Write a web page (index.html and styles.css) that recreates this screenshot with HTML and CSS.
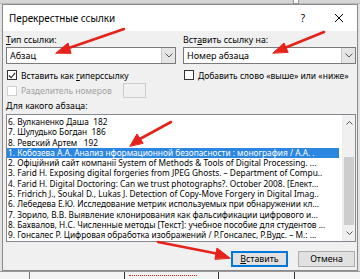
FILE: index.html
```html
<!DOCTYPE html>
<html lang="ru">
<head>
    <meta charset="UTF-8">
    <meta name="viewport" content="width=device-width, initial-scale=1.0">
    <title>Перекрестные ссылки</title>
    <link rel="stylesheet" href="styles.css">
</head>
<body>
    <div class="word-top"><span class="ruler-mark"></span></div>

    <div class="dialog">
        <div class="titlebar">
            <span class="title">Перекрестные ссылки</span>
            <span class="help">?</span>
            <span class="close">
                <svg width="10" height="10" viewBox="0 0 10 10"><path d="M1 1L9 9M9 1L1 9" stroke="#000" stroke-width="1"/></svg>
            </span>
        </div>

        <div class="content">
            <div class="cols">
                <div class="col">
                    <div class="lbl"><u>Т</u>ип ссылки:</div>
                    <div class="combo">
                        <span class="combo-text">Абзац</span>
                        <span class="drop"><svg width="8" height="5" viewBox="0 0 8 5"><path d="M0.5 0.5L4 4L7.5 0.5" fill="none" stroke="#555" stroke-width="1"/></svg></span>
                    </div>
                    <div class="check">
                        <span class="box"><svg width="9" height="9" viewBox="0 0 9 9"><path d="M1 4.5L3.5 7L8 1.5" fill="none" stroke="#222" stroke-width="1.2"/></svg></span>
                        <span class="check-text">Вставить как <u>г</u>иперссылку</span>
                    </div>
                    <div class="check disabled">
                        <span class="box"></span>
                        <span class="check-text">Разделитель номеров</span>
                        <span class="sep-field"></span>
                    </div>
                </div>
                <div class="col">
                    <div class="lbl">Вст<u>а</u>вить ссылку на:</div>
                    <div class="combo">
                        <span class="combo-text">Номер абзаца</span>
                        <span class="drop"><svg width="8" height="5" viewBox="0 0 8 5"><path d="M0.5 0.5L4 4L7.5 0.5" fill="none" stroke="#555" stroke-width="1"/></svg></span>
                    </div>
                    <div class="check">
                        <span class="box"></span>
                        <span class="check-text"><u>Д</u>обавить слово «выше» или «ниже»</span>
                    </div>
                </div>
            </div>

            <div class="lbl list-lbl">Для какого абзаца:</div>
            <div class="listbox">
                <ul class="items">
                    <li>6. Вулканенко Даша&nbsp; 182</li>
                    <li>7. Шулудько Богдан&nbsp; 186</li>
                    <li>8. Ревский Артем&nbsp;&nbsp; 192</li>
                    <li class="selected">1. Кобозева А.А. Анализ нформационной безопасности : монография / А.А. .</li>
                    <li>2. Офіційний сайт компанії System of Methods &amp; Tools of Digital Processing. ...</li>
                    <li>3. Farid H. Exposing digital forgeries from JPEG Ghosts. – Department of Compu..</li>
                    <li>4. Farid H. Digital Doctoring: Can we trust photographs?. October 2008. [Елект...</li>
                    <li>5. Fridrich J., Soukal D., Lukas J. Detection of Copy-Move Forgery in Digital Imag..</li>
                    <li>6. Лебедева Е.Ю. Исследование метрик используемых при обнаружении кл...</li>
                    <li>7. Зорило, В.В. Выявление клонирования как фальсификации цифрового и...</li>
                    <li>8. Бахвалов, Н.С. Численные методы [Текст]: учебное пособие для студентов ...</li>
                    <li>9. Гонсалес Р. Цифровая обработка изображений / Р.Гонсалес, Р.Вудс. – М.: ...</li>
                </ul>
                <div class="scrollbar">
                    <span class="sb-arrow"><svg width="7" height="4" viewBox="0 0 7 4"><path d="M0.5 3.5L3.5 0.5L6.5 3.5" fill="none" stroke="#555" stroke-width="1"/></svg></span>
                    <span class="sb-track"><span class="sb-thumb"></span></span>
                    <span class="sb-arrow"><svg width="7" height="4" viewBox="0 0 7 4"><path d="M0.5 0.5L3.5 3.5L6.5 0.5" fill="none" stroke="#555" stroke-width="1"/></svg></span>
                </div>
            </div>

            <div class="buttons">
                <button class="btn default"><u>В</u>ставить</button>
                <button class="btn">Отмена</button>
            </div>
        </div>
    </div>

    <div class="word-bottom">
        <span class="cell c1"></span>
        <span class="cell c2"></span>
        <span class="cell c3"><span class="squiggle"></span></span>
        <span class="cell c4"></span>
        <span class="cell c5"></span>
    </div>

    <svg class="arrows" width="360" height="279" viewBox="0 0 360 279">
        <g stroke="#e5231b" stroke-width="2.6" stroke-linecap="round" fill="#e5231b">
            <line x1="124" y1="29" x2="66" y2="49"/>
            <polygon points="56,53 68,43 71,53" stroke-width="1"/>
            <line x1="324" y1="32" x2="282" y2="49"/>
            <polygon points="273,53 284,43 288,52" stroke-width="1"/>
            <line x1="171" y1="122" x2="138" y2="140"/>
            <polygon points="130,146 137,134 143,143" stroke-width="1"/>
            <line x1="158" y1="242" x2="219" y2="254"/>
            <polygon points="230,258 217,248 215,259" stroke-width="1"/>
        </g>
    </svg>
</body>
</html>
```

FILE: styles.css
```css
body { margin: 0; width: 360px; height: 279px; overflow: hidden; position: relative; background: #e3e3e3; font-family: "Noto Sans", "Open Sans", sans-serif; font-size: 8.5px; color: #000; }

.word-top { height: 4px; background: #d6d6d6; border-bottom: 1px solid #b9b9b9; box-sizing: border-box; position: relative; }
.ruler-mark { position: absolute; left: 293px; top: 0; width: 6px; height: 4px; background: #fafafa; border: 1px solid #999; border-top: 0; box-sizing: border-box; }

.dialog { margin-left: 2px; width: 356px; border: 1px solid #8a8a8a; box-sizing: border-box; background: #f0f0f0; }
.titlebar { height: 26px; background: #fff; display: flex; align-items: center; padding-left: 6px; }
.title { flex: 1; font-size: 9.9px; }
.help { width: 36px; font-size: 10px; text-align: center; }
.close { width: 36px; display: flex; justify-content: center; }

.content { padding: 3px 1px 3px 3px; }
.cols { display: grid; grid-template-columns: 170px 173px; column-gap: 7px; }
.lbl { height: 12px; line-height: 12px; white-space: nowrap; font-size: 8.8px; }
.lbl u, .check u, .btn u { text-decoration-thickness: 1px; text-underline-offset: 1px; }

.combo { margin-top: 1px; height: 17px; box-sizing: border-box; border: 1px solid #7a7a7a; background: #fff; display: flex; }
.combo-text { flex: 1; line-height: 15px; padding-left: 3px; font-size: 9px; }
.drop { width: 13px; background: #e5e5e5; border-left: 1px solid #c8c8c8; display: flex; align-items: center; justify-content: center; }

.check { margin-top: 5px; height: 12px; display: flex; align-items: center; white-space: nowrap; }
.check-text { margin-left: 4px; }
.box { flex: none; width: 10px; height: 10px; margin-left: 1px; box-sizing: border-box; border: 1px solid #333; background: #fff; display: flex; align-items: center; justify-content: center; }
.check.disabled { margin-top: 2px; height: 15px; color: #a2a2a2; }
.check.disabled .box { border-color: #cfcfcf; }
.sep-field { margin-left: 11px; width: 23px; height: 15px; box-sizing: border-box; border: 1px solid #cccccc; background: #f0f0f0; }

.list-lbl { margin-top: 2px; }
.listbox { margin-top: 2px; height: 128px; box-sizing: border-box; border: 1px solid #828790; background: #fff; display: flex; }
.items { flex: 1; margin: 0; padding: 2px 0 0 0; list-style: none; min-width: 0; }
.items li { height: 10.3px; line-height: 10.3px; padding-left: 1px; margin-right: 3px; white-space: nowrap; overflow: hidden; font-size: 8.3px; }
.items li.selected { background: #2b86df; color: #fff; }

.scrollbar { width: 12px; display: flex; flex-direction: column; background: #f0f0f0; border-left: 1px solid #ececec; }
.sb-arrow { height: 16px; display: flex; align-items: center; justify-content: center; }
.sb-track { flex: 1; padding-top: 26px; display: flex; flex-direction: column; }
.sb-thumb { flex: 1; margin: 0 1px; background: #cdcdcd; }

.buttons { margin-top: 9px; display: flex; justify-content: flex-end; gap: 10px; padding-right: 1px; }
.btn { width: 57px; height: 16px; padding: 0; font-family: inherit; font-size: 8.8px; color: #000; background: #e1e1e1; border: 1px solid #adadad; }
.btn.default { border-color: #0078d7; box-shadow: inset 0 0 0 1px #0078d7; }

.word-bottom { height: 8px; display: flex; background: #f4f4f4; border-top: 1px solid #9a9a9a; box-sizing: border-box; }
.cell { border-right: 1px solid #333; height: 100%; }
.c1 { width: 29px; border-right-color: #777; }
.c2 { width: 94px; }
.c3 { width: 93px; }
.c4 { width: 75px; }
.c5 { flex: 1; border-right: 0; }
.squiggle { display: block; margin: 1px 0 0 4px; width: 68px; height: 2px; border-bottom: 1px dotted #d22; }

.arrows { position: absolute; left: 0; top: 0; pointer-events: none; }
```
